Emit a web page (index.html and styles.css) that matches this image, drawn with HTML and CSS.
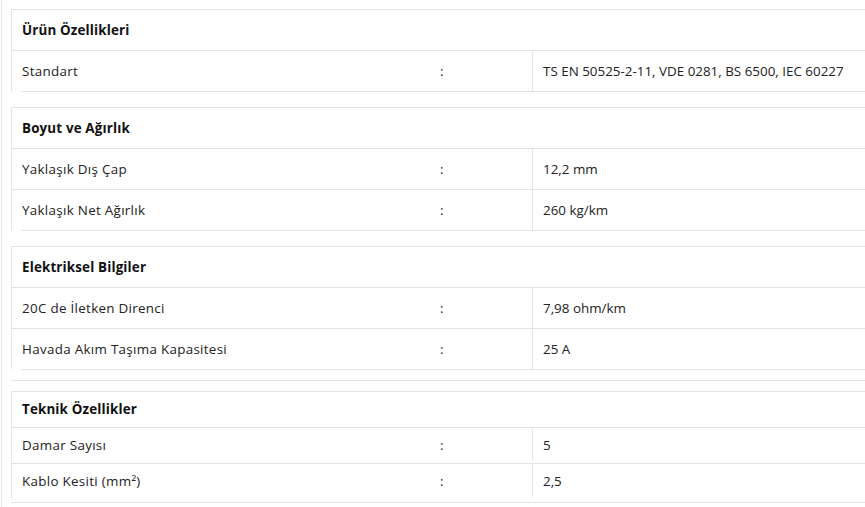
FILE: index.html
```html
<!DOCTYPE html>
<html lang="tr">
<head>
<meta charset="utf-8">
<title>Ürün Özellikleri</title>
<link rel="stylesheet" href="styles.css">
</head>
<body>
<div class="page">
  <div class="group">
    <div class="section">
      <div class="head">Ürün Özellikleri</div>
      <div class="row"><div class="label">Standart</div><div class="sep">:</div><div class="value">TS EN 50525-2-11, VDE 0281, BS 6500, IEC 60227</div></div>
    </div>
    <div class="end"></div>
  </div>

  <div class="group">
    <div class="section">
      <div class="head">Boyut ve Ağırlık</div>
      <div class="row"><div class="label">Yaklaşık Dış Çap</div><div class="sep">:</div><div class="value">12,2 mm</div></div>
      <div class="row"><div class="label">Yaklaşık Net Ağırlık</div><div class="sep">:</div><div class="value">260 kg/km</div></div>
    </div>
    <div class="end"></div>
  </div>

  <div class="group group-tight">
    <div class="section">
      <div class="head">Elektriksel Bilgiler</div>
      <div class="row"><div class="label">20C de İletken Direnci</div><div class="sep">:</div><div class="value">7,98 ohm/km</div></div>
      <div class="row"><div class="label">Havada Akım Taşıma Kapasitesi</div><div class="sep">:</div><div class="value">25 A</div></div>
    </div>
    <div class="end"></div>
  </div>

  <div class="divider"></div>

  <div class="group compact">
    <div class="section">
      <div class="head">Teknik Özellikler</div>
      <div class="row"><div class="label">Damar Sayısı</div><div class="sep">:</div><div class="value">5</div></div>
      <div class="row"><div class="label">Kablo Kesiti (mm²)</div><div class="sep">:</div><div class="value">2,5</div></div>
    </div>
    <div class="end end-full"></div>
  </div>
</div>
</body>
</html>
```

FILE: styles.css
```css
html, body {
  margin: 0;
  padding: 0;
  background: #ffffff;
  overflow: hidden;
}

body {
  padding-left: 1px;
  font-family: "Open Sans", "Liberation Sans", sans-serif;
  font-size: 13.4px;
  color: #222222;
}

.page {
  border-left: 1px solid #e6e6e6;
  padding: 9px 0 0 9px;
  min-height: 507px;
  box-sizing: border-box;
}

.group {
  margin-bottom: 15px;
}

.group-tight {
  margin-bottom: 10px;
}

.section {
  border-left: 1px solid #e4e4e4;
  border-top: 1px solid #e4e4e4;
}

.head {
  height: 40px;
  display: flex;
  align-items: center;
  padding: 0 10px;
  font-weight: 700;
  letter-spacing: 0.15px;
  color: #111111;
  border-bottom: 1px solid #e4e4e4;
}

.row {
  display: grid;
  grid-template-columns: 418px 102px 1fr;
  height: 40px;
}

.row + .row {
  border-top: 1px solid #e4e4e4;
}

.label, .sep, .value {
  display: flex;
  align-items: center;
  padding: 0 10px;
  white-space: nowrap;
}

.label {
  letter-spacing: 0.3px;
}

.value {
  border-left: 1px solid #e4e4e4;
}

.end {
  margin-left: 10px;
  border-top: 1px solid #e4e4e4;
}

.divider {
  border-top: 1px solid #e4e4e4;
  margin-bottom: 10px;
}

.compact .head {
  height: 33px;
  padding-bottom: 2px;
}

.compact .row {
  height: 33px;
  padding-bottom: 2px;
}

.compact .end-full {
  margin-left: 0;
  margin-top: 3px;
}
```
